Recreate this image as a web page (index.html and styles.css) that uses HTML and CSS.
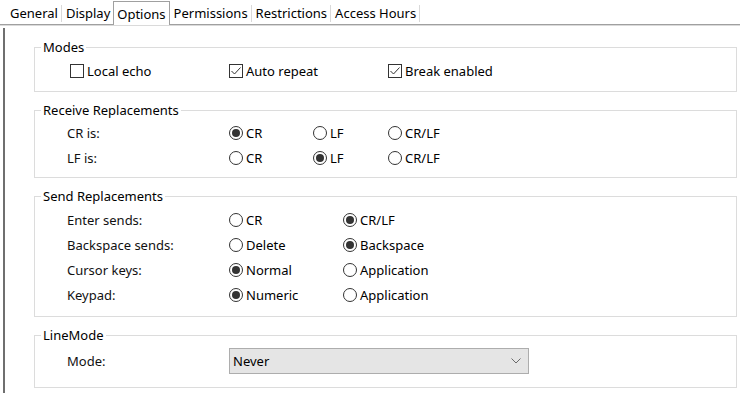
FILE: index.html
```html
<!DOCTYPE html>
<html lang="en">
<head>
    <meta charset="UTF-8">
    <meta name="viewport" content="width=device-width, initial-scale=1.0">
    <title>Session Options</title>
    <link rel="stylesheet" href="styles.css">
</head>
<body>
    <div class="tabs">
        <span class="tab">General</span>
        <span class="tab before-active">Display</span>
        <span class="tab active">Options</span>
        <span class="tab">Permissions</span>
        <span class="tab">Restrictions</span>
        <span class="tab">Access Hours</span>
    </div>

    <div class="panel">
        <!-- Modes -->
        <fieldset class="group">
            <legend>Modes</legend>
            <div class="row row-modes">
                <label class="opt"><span class="check"></span>Local echo</label>
                <label class="opt">
                    <span class="check">
                        <svg viewBox="0 0 12 12"><polyline points="1.5,6 4.5,9 10.5,2.5"/></svg>
                    </span>Auto repeat
                </label>
                <label class="opt">
                    <span class="check">
                        <svg viewBox="0 0 12 12"><polyline points="1.5,6 4.5,9 10.5,2.5"/></svg>
                    </span>Break enabled
                </label>
            </div>
        </fieldset>

        <!-- Receive Replacements -->
        <fieldset class="group group-receive">
            <legend>Receive Replacements</legend>
            <div class="row row-receive">
                <span class="field-label">CR is:</span>
                <label class="opt"><span class="radio on"></span>CR</label>
                <label class="opt"><span class="radio"></span>LF</label>
                <label class="opt"><span class="radio"></span>CR/LF</label>
            </div>
            <div class="row row-receive">
                <span class="field-label">LF is:</span>
                <label class="opt"><span class="radio"></span>CR</label>
                <label class="opt"><span class="radio on"></span>LF</label>
                <label class="opt"><span class="radio"></span>CR/LF</label>
            </div>
        </fieldset>

        <!-- Send Replacements -->
        <fieldset class="group group-send">
            <legend>Send Replacements</legend>
            <div class="row row-send">
                <span class="field-label">Enter sends:</span>
                <label class="opt"><span class="radio"></span>CR</label>
                <label class="opt"><span class="radio on"></span>CR/LF</label>
            </div>
            <div class="row row-send">
                <span class="field-label">Backspace sends:</span>
                <label class="opt"><span class="radio"></span>Delete</label>
                <label class="opt"><span class="radio on"></span>Backspace</label>
            </div>
            <div class="row row-send">
                <span class="field-label">Cursor keys:</span>
                <label class="opt"><span class="radio on"></span>Normal</label>
                <label class="opt"><span class="radio"></span>Application</label>
            </div>
            <div class="row row-send">
                <span class="field-label">Keypad:</span>
                <label class="opt"><span class="radio on"></span>Numeric</label>
                <label class="opt"><span class="radio"></span>Application</label>
            </div>
        </fieldset>

        <!-- LineMode -->
        <fieldset class="group group-line">
            <legend>LineMode</legend>
            <div class="row row-line">
                <span class="field-label">Mode:</span>
                <div class="select">
                    <span>Never</span>
                    <svg class="chevron" viewBox="0 0 10 6"><polyline points="0.5,0.5 5,5 9.5,0.5"/></svg>
                </div>
            </div>
        </fieldset>
    </div>
</body>
</html>
```

FILE: styles.css
```css
* {
    margin: 0;
    padding: 0;
    box-sizing: border-box;
}

body {
    font-family: "Noto Sans", "Open Sans", sans-serif;
    font-size: 13px;
    color: #000;
    background: #fff;
    width: 740px;
    height: 393px;
    overflow: hidden;
}

/* tab strip */
.tabs {
    display: flex;
    align-items: flex-start;
    height: 25px;
    padding-left: 6px;
    border-bottom: 1px solid #a0a0a0;
    box-shadow: 0 1px 0 #dadada;
}

.tab {
    margin-top: 5px;
    height: 17px;
    line-height: 17px;
    padding: 0 3px 0 4px;
    border-right: 1px solid #d9d9d9;
}

.tab.before-active {
    border-right: none;
}

.tab.active {
    margin-top: 1px;
    height: 24px;
    padding: 4px 3px 0 3px;
    line-height: 17px;
    border: 1px solid #a0a0a0;
    border-bottom: none;
    background: #fff;
    position: relative;
    z-index: 1;
}

/* page body */
.panel {
    margin: 3px 0 0 3px;
    height: 365px;
    border-left: 2px solid #6f6f6f;
    padding: 11px 3px 0 29px;
}

.group {
    border: 1px solid #dcdcdc;
    padding: 3px 0 8px;
    margin: 0 0 10px;
    min-width: 0;
}

.group legend {
    margin-left: 6px;
    padding: 0 2px;
    line-height: 16px;
}

.group-receive {
    padding: 2px 0 7px;
}

.group-send {
    padding: 3px 0 9px;
}

.group-line {
    padding: 5px 0 13px;
}

.row {
    display: grid;
    align-items: center;
    height: 25px;
    padding-left: 32px;
}

.row-modes {
    padding-left: 35px;
    grid-template-columns: 159px 159px auto;
}

.row-receive {
    grid-template-columns: 162px 84px 75px auto;
}

.row-send {
    grid-template-columns: 162px 114px auto;
}

.row-line {
    height: 26px;
    grid-template-columns: 162px 300px;
}

.field-label {
    color: #111;
}

.opt {
    display: flex;
    align-items: center;
    gap: 3px;
}

.check {
    flex: none;
    width: 14px;
    height: 14px;
    border: 1px solid #333;
    background: #fff;
    display: flex;
}

.check svg {
    width: 12px;
    height: 12px;
    fill: none;
    stroke: #333;
    stroke-width: 1;
}

.radio {
    flex: none;
    width: 14px;
    height: 14px;
    border: 1px solid #333;
    border-radius: 50%;
    display: flex;
    align-items: center;
    justify-content: center;
}

.radio.on::after {
    content: "";
    width: 8px;
    height: 8px;
    border-radius: 50%;
    background: #333;
}

.select {
    height: 26px;
    display: flex;
    align-items: center;
    justify-content: space-between;
    padding: 0 7px 0 3px;
    background: #e5e5e5;
    border: 1px solid #adadad;
}

.chevron {
    width: 10px;
    height: 6px;
    fill: none;
    stroke: #6a6a6a;
    stroke-width: 1;
}
```
